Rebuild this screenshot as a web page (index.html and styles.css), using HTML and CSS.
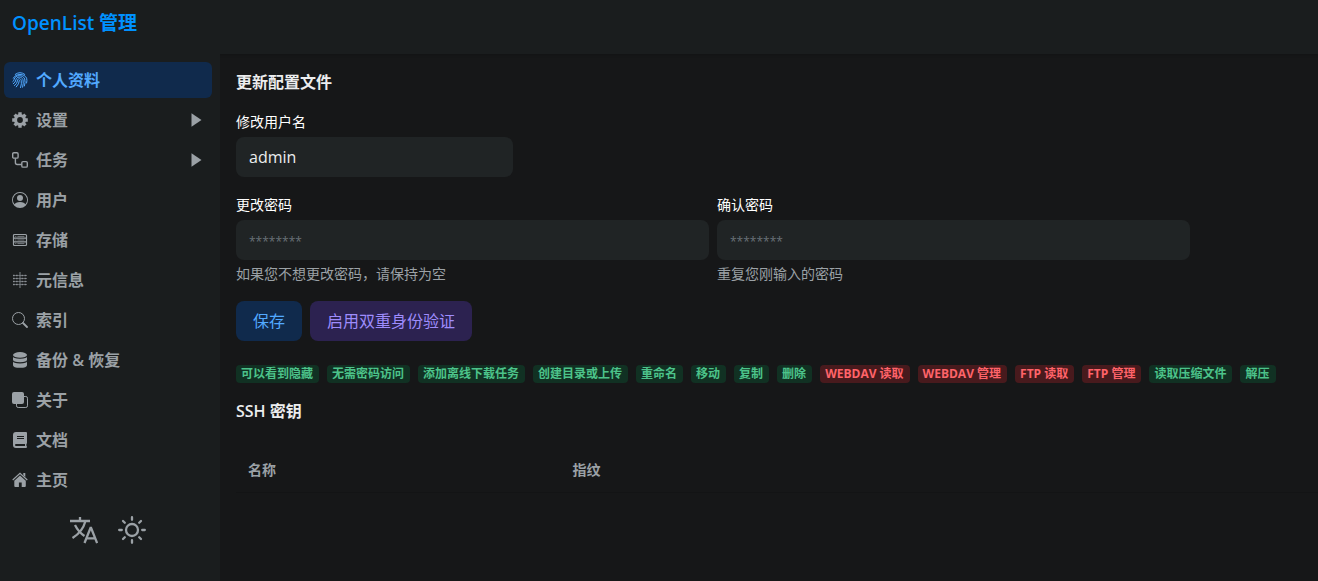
FILE: index.html
```html
<!DOCTYPE html>
<html lang="zh-CN">
<head>
<meta charset="utf-8">
<meta name="viewport" content="width=device-width, initial-scale=1">
<title>OpenList 管理</title>
<link rel="stylesheet" href="styles.css">
</head>
<body>
<header class="header"><a class="brand" href="#">OpenList 管理</a></header>
<div class="layout">
  <aside class="sidebar">
    <nav class="menu">
      <a class="item active" href="#">
        <svg class="icon" viewBox="0 0 16 16" fill="none" stroke="currentColor" stroke-width="1" stroke-linecap="round"><path d="M3.2 2.4Q8-1.2 12.8 2.4M1.3 6.2C3.5 1.2 12.5 1.2 14.6 6.2Q15.3 8.5 14.6 11M.8 9.6Q2 8.8 2.2 7.3C3.2 2.6 11 2.4 12.7 7Q13.7 10.4 12.4 14M1.3 11.8Q3.6 10.4 3.9 7.8C4.5 4.3 9.8 4.2 11 7.7Q11.8 11 10.6 15.2M2.5 13.6Q5.3 11.5 5.6 8.2C6 6.2 8.5 6.2 9.2 8.2Q9.9 11.5 8.6 15.6M4.3 14.9Q7.2 12 7.4 8.5"/></svg>
        <span>个人资料</span></a>
      <button class="item" type="button" aria-expanded="false">
        <svg class="icon" viewBox="0 0 16 16" fill="none" stroke="currentColor"><circle cx="8" cy="8" r="4.5" stroke-width="3.2"/><path stroke-width="3.4" d="M8 .2v3M8 12.8v3M.2 8h3M12.8 8h3M2.6 2.6l2 2M11.4 11.4l2 2M13.4 2.6l-2 2M4.6 11.4l-2 2"/></svg>
        <span>设置</span>
        <svg class="arrow" viewBox="0 0 10 14" fill="currentColor"><path d="M0 .2 10 7 0 13.8z"/></svg></button>
      <button class="item" type="button" aria-expanded="false">
        <svg class="icon" viewBox="0 0 16 16" fill="none" stroke="currentColor" stroke-width="1.4"><rect x=".7" y=".7" width="5.4" height="5.4" rx="1.2"/><rect x="9.8" y="9.6" width="5.5" height="5.5" rx="1.2"/><path d="M3.4 6.2v4.4q0 1.9 1.9 1.9h4.5"/></svg>
        <span>任务</span>
        <svg class="arrow" viewBox="0 0 10 14" fill="currentColor"><path d="M0 .2 10 7 0 13.8z"/></svg></button>
      <a class="item" href="#">
        <svg class="icon" viewBox="0 0 16 16" fill="currentColor"><path d="M11 6a3 3 0 1 1-6 0 3 3 0 0 1 6 0"/><path fill-rule="evenodd" d="M0 8a8 8 0 1 1 16 0A8 8 0 0 1 0 8m8-7a7 7 0 0 0-5.468 11.37C3.242 11.226 4.805 10 8 10s4.757 1.225 5.468 2.37A7 7 0 0 0 8 1"/></svg>
        <span>用户</span></a>
      <a class="item" href="#">
        <svg class="icon" viewBox="0 0 16 16" fill="none" stroke="currentColor" stroke-width="1.2"><rect x="1.5" y="2.5" width="13" height="11" rx="1"/><path d="M1.5 6.2h13M1.5 9.8h13"/><path stroke-width=".7" d="M3.2 4.4h1.2M5.4 4.4h7M3.2 8h1.2M5.4 8h7M3.2 11.6h1.2M5.4 11.6h7"/></svg>
        <span>存储</span></a>
      <a class="item" href="#">
        <svg class="icon" viewBox="0 0 16 16" fill="none" stroke="currentColor"><path stroke-width=".8" d="M8 0v16"/><path stroke-width=".5" d="M1 3.5h14M1 6.5h14M1 9.5h14M1 12.5h14"/><path stroke-width="1.7" stroke-dasharray="1.7 1.3" d="M1 3.5h5.8M1 6.5h5.8M1 9.5h5.8M1 12.5h5.8M9.5 3.5h5.8M9.5 6.5h5.8M9.5 9.5h5.8M9.5 12.5h5.8" opacity=".7"/></svg>
        <span>元信息</span></a>
      <a class="item" href="#">
        <svg class="icon" viewBox="0 0 16 16" fill="none" stroke="currentColor"><circle cx="6.5" cy="6.5" r="6"/><path d="m11 11 4 4" stroke-width="1.8" stroke-linecap="round"/></svg>
        <span>索引</span></a>
      <a class="item" href="#">
        <svg class="icon" viewBox="0 0 16 16" fill="currentColor"><ellipse cx="8" cy="2.9" rx="7" ry="2.8"/><path d="M1 4.6q0 2.1 7 2.2 7-.1 7-2.2v3.2q0 2.3-7 2.4-7-.1-7-2.4zM1 9.2q0 2.1 7 2.2 7-.1 7-2.2v4q0 2.5-7 2.6-7-.1-7-2.6z"/></svg>
        <span>备份 &amp; 恢复</span></a>
      <a class="item" href="#">
        <svg class="icon" viewBox="0 0 16 16"><rect width="12" height="12" rx="2" fill="currentColor"/><path d="M12 4.5h1.8q1.7 0 1.7 1.7v7.6q0 1.7-1.7 1.7H6.2q-1.7 0-1.7-1.7V12" fill="none" stroke="currentColor"/></svg>
        <span>关于</span></a>
      <a class="item" href="#">
        <svg class="icon" viewBox="0 0 16 16" fill="currentColor"><path fill-rule="evenodd" d="M4 0h10q1 0 1 1v10q0 .6-.6.9v2.2q.6.2.6.9t-.8 1H4q-3 0-3-3V3q0-3 3-3zM5 4v1h7V4zM5 6v1h7V6zM4 12q-1 0-1 1t1 1h9v-2z"/></svg>
        <span>文档</span></a>
      <a class="item" href="#">
        <svg class="icon" viewBox="0 0 16 16"><path d="M.7 8 8 1.4 15.3 8" fill="none" stroke="currentColor" stroke-width="1.2"/><path d="M11.3 1h2v4l-2-1.8zM8 3.4l5.8 5.3V14q0 1-1 1H9.7v-4.5H6.9V15H3.3q-1 0-1-1V8.7z" fill="currentColor"/></svg>
        <span>主页</span></a>
    </nav>
    <div class="tools">
      <button class="tool" type="button" aria-label="语言">
        <svg viewBox="0 0 28 28" fill="none" stroke="currentColor" stroke-width="2.3"><path d="M0 5h20M10 1v4M15.5 5Q12.5 16 2.5 22M5 9q3.5 7 9.5 11"/><path d="m14.5 27 6-15h.6l6 15M16.5 22.3h8.7"/></svg></button>
      <button class="tool" type="button" aria-label="切换主题">
        <svg viewBox="0 0 28 28" fill="none" stroke="currentColor" stroke-width="2.3" stroke-linecap="round"><circle cx="14" cy="14" r="6"/><path d="M14 1.2v2.6M14 24.2v2.6M1.2 14h2.6M24.2 14h2.6M5 5l1.8 1.8M21.2 21.2 23 23M23 5l-1.8 1.8M6.8 21.2 5 23"/></svg></button>
    </div>
  </aside>
  <main class="main">
    <form class="form">
      <h2 class="title">更新配置文件</h2>
      <div class="field field-name">
        <label for="username">修改用户名</label>
        <input id="username" type="text" value="admin">
      </div>
      <div class="passwords">
        <div class="field">
          <label for="password">更改密码</label>
          <input id="password" type="password" placeholder="********">
          <p class="help">如果您不想更改密码，请保持为空</p>
        </div>
        <div class="field">
          <label for="confirm">确认密码</label>
          <input id="confirm" type="password" placeholder="********">
          <p class="help">重复您刚输入的密码</p>
        </div>
      </div>
      <div class="actions">
        <button class="btn" type="button">保存</button>
        <button class="btn accent" type="button">启用双重身份验证</button>
      </div>
    </form>
    <div class="badges">
      <span class="badge">可以看到隐藏</span>
      <span class="badge">无需密码访问</span>
      <span class="badge">添加离线下载任务</span>
      <span class="badge">创建目录或上传</span>
      <span class="badge">重命名</span>
      <span class="badge">移动</span>
      <span class="badge">复制</span>
      <span class="badge">删除</span>
      <span class="badge danger">WEBDAV 读取</span>
      <span class="badge danger">WEBDAV 管理</span>
      <span class="badge danger">FTP 读取</span>
      <span class="badge danger">FTP 管理</span>
      <span class="badge">读取压缩文件</span>
      <span class="badge">解压</span>
    </div>
    <h2 class="title">SSH 密钥</h2>
    <table class="keys">
      <thead><tr><th class="col-name" scope="col">名称</th><th scope="col">指纹</th></tr></thead>
      <tbody></tbody>
    </table>
  </main>
</div>
</body>
</html>
```
FILE: styles.css
```css
* { box-sizing: border-box; }

body {
  margin: 0;
  min-height: 100vh;
  display: flex;
  flex-direction: column;
  background: #161718;
  color: #ecedee;
  font: 16px/24px "Open Sans", "Noto Sans CJK SC", sans-serif;
}

button, input { font: inherit; color: inherit; border: 0; }
button { cursor: pointer; }
h2, p { margin: 0; }

.header {
  padding: 8px 12px 16px;
  background: #1a1d1e;
  box-shadow: 0 1px 3px rgba(0, 0, 0, .2);
}
.brand {
  display: block;
  font-size: 19px;
  font-weight: 600;
  line-height: 30px;
  color: #0091ff;
  text-decoration: none;
}

.layout { flex: 1; display: flex; }

.sidebar {
  flex: 0 0 220px;
  padding: 8px 8px 8px 4px;
  background: #1a1d1e;
  color: #9ba1a6;
}
.menu { display: flex; flex-direction: column; gap: 4px; }
.item {
  display: flex;
  align-items: center;
  gap: 8px;
  height: 36px;
  padding: 0 10px 0 8px;
  border-radius: 6px;
  background: none;
  color: inherit;
  font-weight: 600;
  text-align: left;
  text-decoration: none;
}
.item.active { background: #102a4c; color: #52a9ff; }
.icon { width: 16px; height: 16px; flex: none; }
.arrow { width: 11px; height: 14px; margin-left: auto; }

.tools { display: flex; justify-content: center; gap: 20px; margin-top: 18px; }
.tool { display: flex; padding: 0; background: none; }
.tool svg { width: 28px; height: 28px; }

.main { flex: 1; min-width: 0; padding: 16px 0 16px 16px; }
.title { font-size: 16px; font-weight: 600; }

.form { display: flex; flex-direction: column; gap: 18px; max-width: 954px; }
.field { display: flex; flex-direction: column; font-size: 14px; }
.field-name { max-width: 277px; }
.field label { line-height: 20px; margin-bottom: 5px; color: #fff; }
.field input {
  width: 100%;
  height: 40px;
  padding: 0 13px;
  border-radius: 8px;
  background: #202425;
  font-size: 16px;
}
.field input::placeholder { color: #697177; opacity: 1; font-size: 12px; }
.help { margin-top: 4px; margin-bottom: -1px; line-height: 20px; color: #9ba1a6; }
.passwords { display: grid; grid-template-columns: 1fr 1fr; gap: 8px; }

.actions { display: flex; gap: 8px; }
.btn {
  height: 40px;
  padding: 0 17px;
  border-radius: 8px;
  background: #102a4c;
  color: #52a9ff;
}
.btn.accent { background: #2c2250; color: #9e8cfc; }

.badges { display: flex; flex-wrap: wrap; gap: 8px; margin: 24px 0 16px; }
.badge {
  padding: 0 6px 0 5px;
  border-radius: 4px;
  background: #113123;
  color: #4cc38a;
  font-size: 12px;
  font-weight: 700;
  line-height: 18px;
}
.badge.danger { background: #481a1d; color: #ff6369; }

.keys { width: 100%; margin-top: 25px; border-collapse: collapse; }
.keys th {
  padding: 12px;
  border-bottom: 1px solid #131415;
  color: #9ba1a6;
  font-size: 14px;
  font-weight: 600;
  line-height: 20px;
  text-align: left;
}
.col-name { width: 30%; }
```
